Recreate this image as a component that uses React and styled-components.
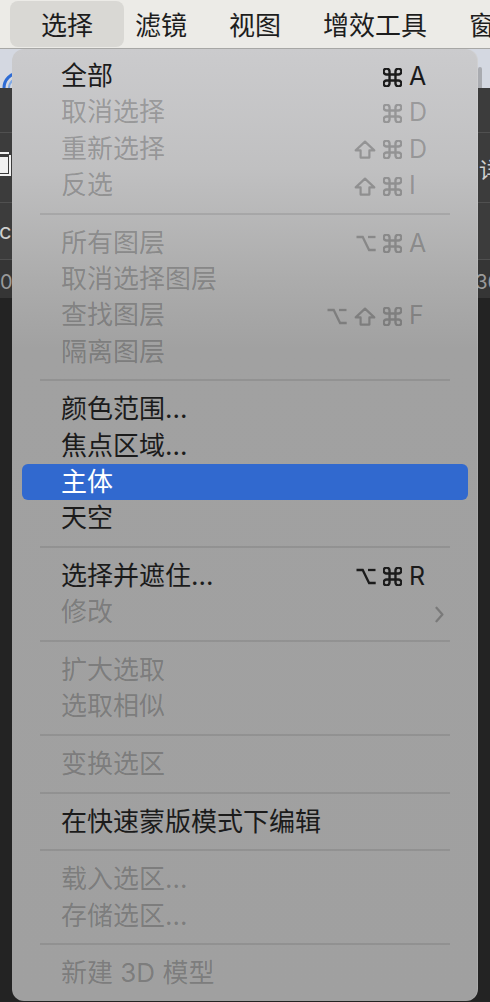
import React from "react";
import styled, { createGlobalStyle } from "styled-components";

const GlobalStyle = createGlobalStyle`
  html, body { margin: 0; padding: 0; }
  body {
    width: 490px;
    height: 1002px;
    overflow: hidden;
    background: #232323;
    font-family: Inter, "Noto Sans CJK SC", sans-serif;
  }
  #root { height: 1002px; }
`;

const Page = styled.div`
  position: relative;
  width: 490px;
  height: 1002px;
  display: flex;
  flex-direction: column;
  overflow: hidden;
`;

const MenuBar = styled.div`
  height: 48px;
  flex: none;
  display: flex;
  align-items: center;
  padding-left: 10px;
  background: #ecebe7;
  border-bottom: 1px solid #a7a7a5;
  white-space: nowrap;
`;

const BarItem = styled.div`
  height: 46px;
  line-height: 46px;
  font-size: 26px;
  color: #1d1d1d;
  font-family: "Noto Sans CJK SC", sans-serif;
  padding: ${(p) => (p.$active ? "0 31px" : "0 21px")};
  margin-right: ${(p) => (p.$active ? "-10px" : "0")};
  background: ${(p) => (p.$active ? "#d9d8d4" : "transparent")};
  border-radius: 8px;
`;

const Workspace = styled.div`
  flex: 1;
  display: flex;
  flex-direction: column;
`;

const OptionsBar = styled.div`
  height: 39px;
  flex: none;
  display: flex;
  align-items: flex-end;
  justify-content: space-between;
  background: #d4d8e1;
`;

const ScrollNub = styled.div`
  width: 4px;
  height: 21px;
  margin-right: 8px;
  background: #a9abb0;
  border-radius: 2px 2px 0 0;
`;

const DarkRow = styled.div`
  height: ${(p) => p.$h}px;
  flex: none;
  display: flex;
  align-items: center;
  justify-content: space-between;
  background: #3c3c3c;
  border-bottom: 1px solid #505050;
  color: #cfcfcf;
  font-size: 22px;
`;

const RulerRow = styled(DarkRow)`
  background: #353535;
  border-bottom: none;
  align-items: flex-start;
  padding-top: 10px;
  box-sizing: border-box;
  font-size: 20px;
  color: #9a9a9a;
`;

const EdgeText = styled.span`
  margin-right: ${(p) => p.$mr || 0}px;
  margin-left: ${(p) => p.$ml || 0}px;
  font-family: Inter, "Noto Sans CJK SC", sans-serif;
`;

const Canvas = styled.div`
  flex: 1;
  background: #232323;
`;

const Menu = styled.div`
  position: absolute;
  top: 49px;
  left: 12px;
  width: 466px;
  height: 952px;
  box-sizing: border-box;
  padding: 9px 10px 10px;
  border-radius: 12px;
  background: linear-gradient(
    180deg,
    #cbcbcd 0px,
    #c0c0c1 120px,
    #acacac 230px,
    #a1a1a1 300px,
    #a0a0a0 100%
  );
  box-shadow: inset -1px 0 0 rgba(255, 255, 255, 0.12);
`;

const Item = styled.div`
  height: 36.3px;
  display: flex;
  align-items: center;
  padding: 0 24px 0 39px;
  border-radius: 6px;
  font-size: 26px;
  line-height: 36px;
  white-space: nowrap;
  background: ${(p) => (p.$hl ? "#3169cf" : "transparent")};
  color: ${(p) =>
    p.$hl ? "#ffffff" : p.$off ? "rgba(0, 0, 0, 0.24)" : "#1b1b1b"};
`;

const Label = styled.span`
  font-family: Inter, "Noto Sans CJK SC", sans-serif;
`;

const Shortcut = styled.div`
  margin-left: auto;
  display: flex;
  align-items: center;
`;

const Mods = styled.div`
  display: flex;
  align-items: center;
  gap: 7px;
  transform: translateY(1px);
`;

const Key = styled.span`
  width: 35px;
  margin-left: 7px;
  font-family: Inter, sans-serif;
  font-size: 25px;
  text-align: left;
`;

const Chevron = styled.svg`
  margin-left: auto;
  display: block;
  transform: translateY(2px);
`;

const Separator = styled.div`
  height: 21.4px;
  display: flex;
  align-items: center;
  padding: 0 18px;
  &::after {
    content: "";
    flex: 1;
    height: 2px;
    background: rgba(0, 0, 0, 0.09);
  }
`;

const Cmd = () => (
  <svg width="19" height="19" viewBox="2.4 2.4 19.2 19.2" fill="none" stroke="currentColor" strokeWidth="2.4">
    <path d="M15 6v12a3 3 0 1 0 3-3H6a3 3 0 1 0 3 3V6a3 3 0 1 0-3 3h12a3 3 0 1 0-3-3" />
  </svg>
);

const Shift = () => (
  <svg width="22" height="19" viewBox="0 0 22 19" fill="none" stroke="currentColor" strokeWidth="2.2" strokeLinejoin="round">
    <path d="M11 1.6 L20.3 10.4 H15.4 V17.6 H6.6 V10.4 H1.7 Z" />
  </svg>
);

const Opt = () => (
  <svg width="20" height="17" viewBox="0 0 20 17" fill="none" stroke="currentColor" strokeWidth="2.3">
    <path d="M0.5 2h6.2l6.4 13h6.6" />
    <path d="M12 2h7.5" />
  </svg>
);

const MOD = { cmd: Cmd, shift: Shift, opt: Opt };

const sections = [
  [
    { label: "全部", mods: ["cmd"], k: "A" },
    { label: "取消选择", mods: ["cmd"], k: "D", off: true },
    { label: "重新选择", mods: ["shift", "cmd"], k: "D", off: true },
    { label: "反选", mods: ["shift", "cmd"], k: "I", off: true },
  ],
  [
    { label: "所有图层", mods: ["opt", "cmd"], k: "A", off: true },
    { label: "取消选择图层", off: true },
    { label: "查找图层", mods: ["opt", "shift", "cmd"], k: "F", off: true },
    { label: "隔离图层", off: true },
  ],
  [
    { label: "颜色范围..." },
    { label: "焦点区域..." },
    { label: "主体", hl: true },
    { label: "天空" },
  ],
  [
    { label: "选择并遮住...", mods: ["opt", "cmd"], k: "R" },
    { label: "修改", off: true, sub: true },
  ],
  [
    { label: "扩大选取", off: true },
    { label: "选取相似", off: true },
  ],
  [{ label: "变换选区", off: true }],
  [{ label: "在快速蒙版模式下编辑" }],
  [
    { label: "载入选区...", off: true },
    { label: "存储选区...", off: true },
  ],
  [{ label: "新建 3D 模型", off: true }],
];

const MenuItem = ({ item }) => (
  <Item $hl={item.hl} $off={item.off}>
    <Label>{item.label}</Label>
    {item.k && (
      <Shortcut>
        <Mods>
          {item.mods.map((m, i) => {
            const Icon = MOD[m];
            return <Icon key={i} />;
          })}
        </Mods>
        <Key>{item.k}</Key>
      </Shortcut>
    )}
    {item.sub && (
      <Chevron width="9" height="17" viewBox="0 0 9 17" fill="none" stroke="currentColor" strokeWidth="2.3" strokeLinecap="round" strokeLinejoin="round">
        <path d="M1.5 1.8 L7.4 8.5 L1.5 15.2" />
      </Chevron>
    )}
  </Item>
);

const LayerGlyph = () => (
  <svg width="12" height="34" viewBox="0 0 12 34" fill="none">
    <path d="M0 2 H9" stroke="#f2f2f2" strokeWidth="2" />
    <rect x="0" y="6" width="8" height="16" fill="#f2f2f2" />
    <path d="M10 4 V24 H0" stroke="#f2f2f2" strokeWidth="2" />
  </svg>
);

const Logo = () => (
  <svg width="14" height="20" viewBox="0 0 14 20" fill="none">
    <circle cx="19" cy="20" r="15" stroke="#2d6bd4" strokeWidth="3" />
    <circle cx="19" cy="20" r="10" stroke="#7fa9e6" strokeWidth="2" />
  </svg>
);

export default function App() {
  return (
    <Page>
      <GlobalStyle />
      <MenuBar>
        <BarItem $active>选择</BarItem>
        <BarItem>滤镜</BarItem>
        <BarItem>视图</BarItem>
        <BarItem>增效工具</BarItem>
        <BarItem>窗口</BarItem>
      </MenuBar>
      <Workspace>
        <OptionsBar>
          <Logo />
          <ScrollNub />
        </OptionsBar>
        <DarkRow $h={44} />
        <DarkRow $h={69}>
          <LayerGlyph />
          <EdgeText $mr={-11}>详</EdgeText>
        </DarkRow>
        <DarkRow $h={56}>
          <EdgeText $ml={-1}>cal</EdgeText>
          <EdgeText />
        </DarkRow>
        <RulerRow $h={38}>
          <EdgeText>0</EdgeText>
          <EdgeText $mr={-10}>36</EdgeText>
        </RulerRow>
        <Canvas />
      </Workspace>
      <Menu>
        {sections.map((sec, si) => (
          <React.Fragment key={si}>
            {si > 0 && <Separator />}
            {sec.map((it, ii) => (
              <MenuItem key={ii} item={it} />
            ))}
          </React.Fragment>
        ))}
      </Menu>
    </Page>
  );
}
